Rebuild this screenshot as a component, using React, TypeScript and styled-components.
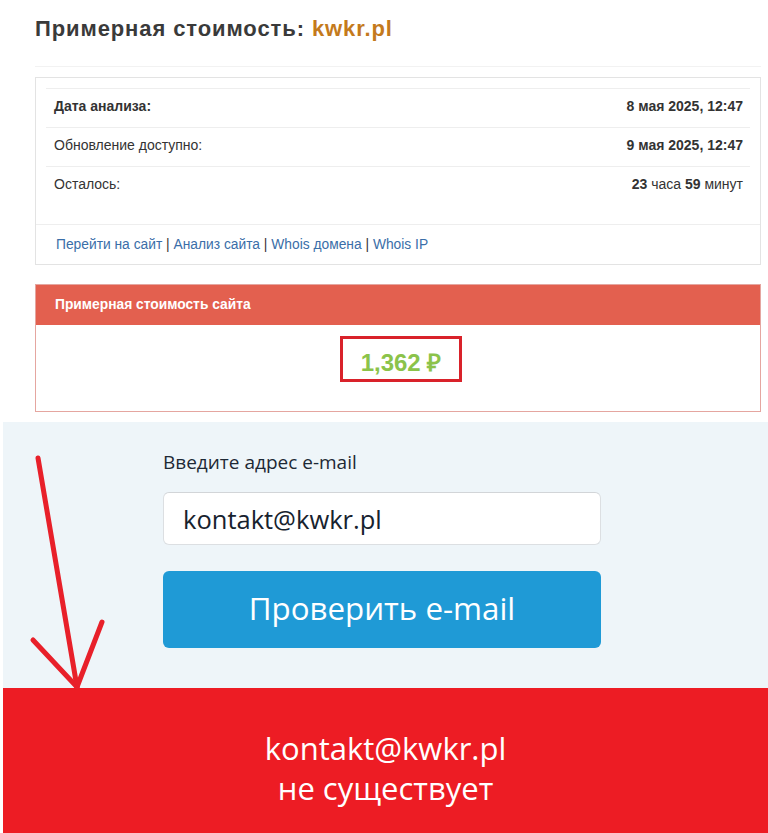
import React from 'react';
import styled, { createGlobalStyle } from 'styled-components';

const GlobalStyle = createGlobalStyle`
  body {
    margin: 0;
    background: #fff;
    font-family: 'Liberation Sans', Arial, sans-serif;
  }
`;

const Page = styled.div`
  width: 768px;
  background: #fff;
`;

const Report = styled.section`
  padding: 0 7px 10px 35px;
`;

const Title = styled.h2`
  margin: 0;
  height: 67px;
  box-sizing: border-box;
  padding-top: 16px;
  border-bottom: 1px solid #f2f2f2;
  font: bold 22px/26px 'Liberation Sans', Arial, sans-serif;
  letter-spacing: 0.9px;
  color: #3a3a3a;
`;

const Domain = styled.span`
  color: #c47a1c;
`;

const Panel = styled.div<{ $tone?: 'plain' | 'danger' }>`
  border: 1px solid ${(p) => (p.$tone === 'danger' ? '#e5a6a0' : '#e3e3e3')};
  margin-top: ${(p) => (p.$tone === 'danger' ? '19px' : '10px')};
  background: #fff;
`;

const PanelBody = styled.div`
  padding: 10px 10px 19px;
`;

const Row = styled.div`
  display: flex;
  justify-content: space-between;
  border-top: 1px solid #eee;
  padding: 8px 7px 11px 8px;
  font-size: 14px;
  line-height: 19px;
  color: #333;
`;

const Label = styled.span<{ $strong?: boolean }>`
  font-weight: ${(p) => (p.$strong ? 'bold' : 'normal')};
`;

const Value = styled.span`
  b {
    font-weight: bold;
  }
`;

const Footer = styled.div`
  border-top: 1px solid #eee;
  padding: 10px 20px;
  font-size: 13.8px;
  line-height: 19px;
  color: #333;
`;

const Link = styled.a`
  color: #3a6ea8;
  text-decoration: none;
`;

const PanelHeading = styled.div`
  background: #e3604f;
  color: #fff;
  height: 40px;
  box-sizing: border-box;
  padding: 10px 19px;
  font-size: 13.8px;
  line-height: 20px;
  font-weight: bold;
`;

const PriceBody = styled.div`
  padding: 11px 0 29px 6px;
  text-align: center;
`;

const PriceBox = styled.div`
  display: inline-block;
  box-sizing: border-box;
  width: 122px;
  height: 46px;
  padding-top: 7px;
  border: 3px solid #d9222a;
  color: #8bc34a;
  font: bold 24px/33px 'Liberation Sans', Arial, sans-serif;
`;

const Checker = styled.section`
  position: relative;
  margin-left: 3px;
`;

const EmailForm = styled.div`
  background: #eef5f9;
  height: 266px;
  box-sizing: border-box;
  padding: 28px 0 0 160px;
  font-family: 'Open Sans', sans-serif;
`;

const FieldLabel = styled.div`
  font-size: 19px;
  line-height: 24px;
  color: #1d2935;
  font-weight: 500;
`;

const EmailInput = styled.div`
  margin-top: 18px;
  width: 438px;
  height: 53px;
  box-sizing: border-box;
  background: #fff;
  border: 1px solid #dcdfe2;
  border-top-color: #d2d5d8;
  border-radius: 6px;
  padding: 0 19px;
  display: flex;
  align-items: center;
  font-size: 25.5px;
  color: #17222e;
`;

const CheckButton = styled.div`
  margin-top: 26px;
  width: 438px;
  height: 77px;
  background: #1f9ad6;
  border-radius: 6px;
  display: flex;
  align-items: center;
  justify-content: center;
  color: #fff;
  font-size: 31.3px;
  padding-bottom: 4px;
  box-sizing: border-box;
`;

const Result = styled.div`
  background: #ed1c24;
  height: 145px;
  box-sizing: border-box;
  padding-top: 40px;
  text-align: center;
  color: #fff;
  font-family: 'Open Sans', sans-serif;
  font-size: 31px;
  line-height: 40px;
`;

const Arrow = styled.svg`
  position: absolute;
  left: 0;
  top: 0;
  pointer-events: none;
`;

export default function App() {
  return (
    <Page>
      <GlobalStyle />
      <Report>
        <Title>
          Примерная стоимость: <Domain>kwkr.pl</Domain>
        </Title>
        <Panel>
          <PanelBody>
            <Row>
              <Label $strong>Дата анализа:</Label>
              <Value>
                <b>8 мая 2025, 12:47</b>
              </Value>
            </Row>
            <Row>
              <Label>Обновление доступно:</Label>
              <Value>
                <b>9 мая 2025, 12:47</b>
              </Value>
            </Row>
            <Row>
              <Label>Осталось:</Label>
              <Value>
                <b>23</b> часа <b>59</b> минут
              </Value>
            </Row>
          </PanelBody>
          <Footer>
            <Link href="#">Перейти на сайт</Link> | <Link href="#">Анализ сайта</Link> |{' '}
            <Link href="#">Whois домена</Link> | <Link href="#">Whois IP</Link>
          </Footer>
        </Panel>
        <Panel $tone="danger">
          <PanelHeading>Примерная стоимость сайта</PanelHeading>
          <PriceBody>
            <PriceBox>1,362 ₽</PriceBox>
          </PriceBody>
        </Panel>
      </Report>
      <Checker>
        <EmailForm>
          <FieldLabel>Введите адрес e-mail</FieldLabel>
          <EmailInput>kontakt@kwkr.pl</EmailInput>
          <CheckButton>Проверить e-mail</CheckButton>
        </EmailForm>
        <Result>
          kontakt@kwkr.pl
          <br />
          не существует
        </Result>
        <Arrow width="110" height="272" viewBox="0 0 110 272">
          <g stroke="#e8202a" strokeWidth="5" strokeLinecap="round" fill="none">
            <path d="M35 36 L74 265" />
            <path d="M30 218 L74 265" />
            <path d="M99 200 L74 265" />
          </g>
        </Arrow>
      </Checker>
    </Page>
  );
}
